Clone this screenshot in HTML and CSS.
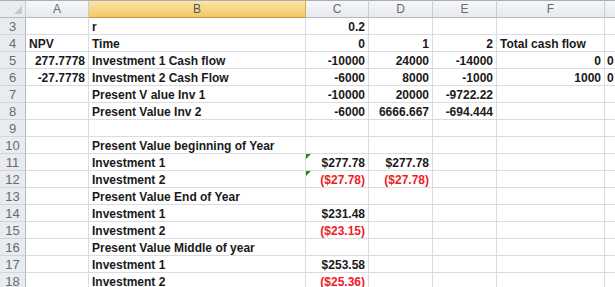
FILE: index.html
```html
<!DOCTYPE html>
<html lang="en">

<head>
  <meta charset="UTF-8">
  <meta name="viewport" content="width=device-width, initial-scale=1.0">
  <title>Sheet1</title>
  <link rel="stylesheet" href="styles.css">
</head>

<body>
  <div class="sheet">
    <div class="corner"><span class="tri"></span></div>
    <div class="colhead">A</div>
    <div class="colhead sel">B</div>
    <div class="colhead">C</div>
    <div class="colhead">D</div>
    <div class="colhead">E</div>
    <div class="colhead">F</div>
    <div class="colhead"></div>

    <div class="rowhead">3</div>
    <div class="cell"></div>
    <div class="cell">r</div>
    <div class="cell num">0.2</div>
    <div class="cell"></div>
    <div class="cell"></div>
    <div class="cell"></div>
    <div class="cell"></div>

    <div class="rowhead">4</div>
    <div class="cell">NPV</div>
    <div class="cell">Time</div>
    <div class="cell num">0</div>
    <div class="cell num">1</div>
    <div class="cell num">2</div>
    <div class="cell">Total cash flow</div>
    <div class="cell"></div>

    <div class="rowhead">5</div>
    <div class="cell num">277.7778</div>
    <div class="cell">Investment 1 Cash flow</div>
    <div class="cell num">-10000</div>
    <div class="cell num">24000</div>
    <div class="cell num">-14000</div>
    <div class="cell num">0</div>
    <div class="cell edge">0</div>

    <div class="rowhead">6</div>
    <div class="cell num">-27.7778</div>
    <div class="cell">Investment 2 Cash Flow</div>
    <div class="cell num">-6000</div>
    <div class="cell num">8000</div>
    <div class="cell num">-1000</div>
    <div class="cell num">1000</div>
    <div class="cell edge">0</div>

    <div class="rowhead">7</div>
    <div class="cell"></div>
    <div class="cell">Present V alue Inv 1</div>
    <div class="cell num">-10000</div>
    <div class="cell num">20000</div>
    <div class="cell num">-9722.22</div>
    <div class="cell"></div>
    <div class="cell"></div>

    <div class="rowhead">8</div>
    <div class="cell"></div>
    <div class="cell">Present Value Inv 2</div>
    <div class="cell num">-6000</div>
    <div class="cell num">6666.667</div>
    <div class="cell num">-694.444</div>
    <div class="cell"></div>
    <div class="cell"></div>

    <div class="rowhead">9</div>
    <div class="cell"></div>
    <div class="cell"></div>
    <div class="cell"></div>
    <div class="cell"></div>
    <div class="cell"></div>
    <div class="cell"></div>
    <div class="cell"></div>

    <div class="rowhead">10</div>
    <div class="cell"></div>
    <div class="cell">Present Value beginning of Year</div>
    <div class="cell"></div>
    <div class="cell"></div>
    <div class="cell"></div>
    <div class="cell"></div>
    <div class="cell"></div>

    <div class="rowhead">11</div>
    <div class="cell"></div>
    <div class="cell">Investment 1</div>
    <div class="cell num flag">$277.78</div>
    <div class="cell num">$277.78</div>
    <div class="cell"></div>
    <div class="cell"></div>
    <div class="cell"></div>

    <div class="rowhead">12</div>
    <div class="cell"></div>
    <div class="cell">Investment 2</div>
    <div class="cell num neg flag">($27.78)</div>
    <div class="cell num neg">($27.78)</div>
    <div class="cell"></div>
    <div class="cell"></div>
    <div class="cell"></div>

    <div class="rowhead">13</div>
    <div class="cell"></div>
    <div class="cell">Present Value End of Year</div>
    <div class="cell"></div>
    <div class="cell"></div>
    <div class="cell"></div>
    <div class="cell"></div>
    <div class="cell"></div>

    <div class="rowhead">14</div>
    <div class="cell"></div>
    <div class="cell">Investment 1</div>
    <div class="cell num">$231.48</div>
    <div class="cell"></div>
    <div class="cell"></div>
    <div class="cell"></div>
    <div class="cell"></div>

    <div class="rowhead">15</div>
    <div class="cell"></div>
    <div class="cell">Investment 2</div>
    <div class="cell num neg">($23.15)</div>
    <div class="cell"></div>
    <div class="cell"></div>
    <div class="cell"></div>
    <div class="cell"></div>

    <div class="rowhead">16</div>
    <div class="cell"></div>
    <div class="cell">Present Value Middle of year</div>
    <div class="cell"></div>
    <div class="cell"></div>
    <div class="cell"></div>
    <div class="cell"></div>
    <div class="cell"></div>

    <div class="rowhead">17</div>
    <div class="cell"></div>
    <div class="cell">Investment 1</div>
    <div class="cell num">$253.58</div>
    <div class="cell"></div>
    <div class="cell"></div>
    <div class="cell"></div>
    <div class="cell"></div>

    <div class="rowhead">18</div>
    <div class="cell"></div>
    <div class="cell">Investment 2</div>
    <div class="cell num neg">($25.36)</div>
    <div class="cell"></div>
    <div class="cell"></div>
    <div class="cell"></div>
    <div class="cell"></div>
  </div>
</body>

</html>
```

FILE: styles.css
```css
body {
  margin: 0;
  overflow: hidden;
  background: #fff;
}

.sheet {
  display: grid;
  grid-template-columns: 26px 63px 217px 63px 64px 64px 108px 60px;
  grid-template-rows: 18px;
  grid-auto-rows: 17px;
  width: 665px;
  font-family: "Liberation Sans", Arial, sans-serif;
}

.corner,
.colhead {
  box-sizing: border-box;
  background: linear-gradient(#f6f7f9, #e6e9ed);
  border-top: 1px solid #a9aeb5;
  border-right: 1px solid #c8ccd2;
  border-bottom: 1px solid #b4b9c0;
  color: #6b6b6b;
  font-size: 12px;
  line-height: 16px;
  text-align: center;
}

.corner {
  position: relative;
  background: #e8ebef;
}

.tri {
  position: absolute;
  right: 3px;
  bottom: 3px;
  width: 0;
  height: 0;
  border-left: 8px solid transparent;
  border-bottom: 8px solid #c4c8cd;
}

.colhead.sel {
  background: linear-gradient(#fbe5a8, #f2c865);
  border-right-color: #d7ab4f;
  border-bottom-color: #c79a3a;
  color: #555;
}

.rowhead {
  box-sizing: border-box;
  background: #e8ebef;
  border-right: 1px solid #b4b9c0;
  border-bottom: 1px solid #d2d6db;
  color: #6b6b6b;
  font-size: 13px;
  line-height: 17px;
  text-align: center;
}

.cell {
  box-sizing: border-box;
  position: relative;
  border-right: 1px solid #dadcdf;
  border-bottom: 1px solid #dadcdf;
  padding: 1px 3px 0;
  color: #1a1a1a;
  font-size: 12px;
  font-weight: bold;
  line-height: 16px;
  white-space: nowrap;
  overflow: visible;
}

.cell.edge {
  padding-left: 2px;
}

.num {
  text-align: right;
}

.neg {
  color: #ee1c25;
}

.flag::before {
  content: "";
  position: absolute;
  left: 0;
  top: 0;
  border-top: 5px solid #1f8a2c;
  border-right: 5px solid transparent;
}
```
